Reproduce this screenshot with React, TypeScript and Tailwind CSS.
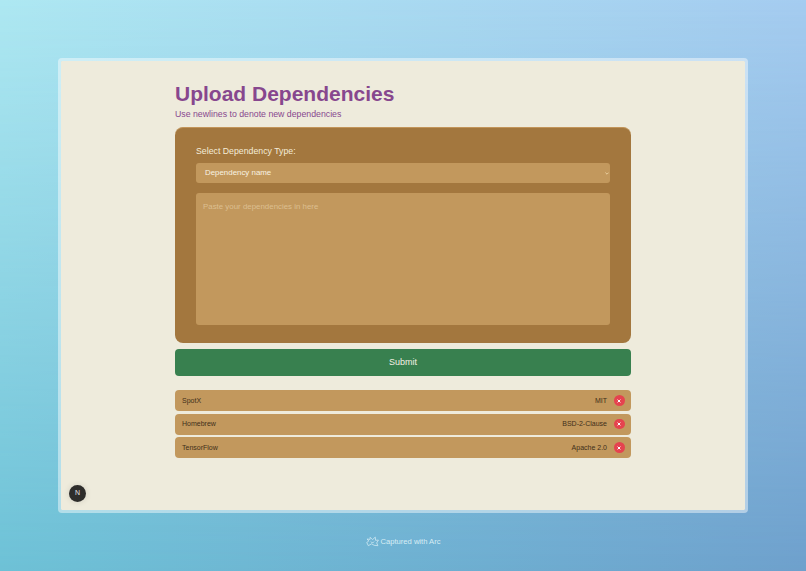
const deps = [
  { name: "SpotX", license: "MIT" },
  { name: "Homebrew", license: "BSD-2-Clause" },
  { name: "TensorFlow", license: "Apache 2.0" },
];

function ArcLogo() {
  return (
    <svg width="13" height="11" viewBox="0 0 14 11" fill="none" stroke="currentColor" strokeWidth="0.8">
      <path d="M4.5 1 L7 3.5 L10 0.8 L10.3 4.2 L13.4 4 L11.5 7 L12.8 10 L8.8 9.6 L6 8 L2.5 10 L0.8 6.5 L3 5 L1.2 2.8 L4.3 3.3 Z" strokeLinejoin="round" />
      <path d="M5 5.5 C6 7 8 7 9 5.5" />
    </svg>
  );
}

export default function App() {
  return (
    <div className="relative h-[571px] w-[806px] overflow-hidden bg-[linear-gradient(to_right,#aee8f2,#a5ccf0)] font-['Liberation_Sans',Arial,sans-serif]">
      {/* lower half of the wallpaper fades in over the top colours */}
      <div className="absolute inset-0 bg-[linear-gradient(to_right,#6dc1d6,#6ea0cc)] [mask-image:linear-gradient(to_bottom,transparent,black)]" />

      <div className="relative flex h-full flex-col">
        <div className="px-[58px] pt-[58px]">
          <div className="relative h-[455px] rounded-[4px] border-[3px] border-white/45 bg-[#eeebdc] bg-clip-padding">
            <div className="mx-auto w-[456px] pt-[20px]">
              <h1 className="text-[21px] leading-[25px] font-bold text-[#87478e]">Upload Dependencies</h1>
              <p className="mt-[2px] text-[8.75px] leading-[13px] text-[#87478e]">Use newlines to denote new dependencies</p>

              <div className="mt-[6px] rounded-[8px] border-t border-t-[#c2955a] bg-[#a3773e] px-[21px] pt-[17px] pb-[18px]">
                <div className="text-[8.75px] leading-[12px] text-[#f4ecd8]">Select Dependency Type:</div>
                <div className="mt-[6px] flex h-[20px] items-center justify-between rounded-[3px] bg-[#c2985d] pr-[1px] pl-[9px] text-[7.9px] text-[#f8f2e2]">
                  <span>Dependency name</span>
                  <svg width="4" height="3" viewBox="0 0 4 3" fill="none" stroke="#e9cf9f" strokeWidth="1">
                    <path d="M0.4 0.6 L2 2.2 L3.6 0.6" />
                  </svg>
                </div>
                <div className="mt-[10px] h-[132px] rounded-[3px] bg-[#c2985d] px-[7px] py-[9px] text-[7.9px] leading-[10px] text-[#dcbf90]">
                  Paste your dependencies in here
                </div>
              </div>

              <button className="mt-[6px] block h-[27px] w-full rounded-[4px] bg-[#38804f] pt-[1px] text-[9px] text-[#f4f1e4]">Submit</button>

              <div className="mt-[14px] flex flex-col gap-[2.5px]">
                {deps.map((d) => (
                  <div key={d.name} className="flex h-[21px] items-center justify-between rounded-[4px] bg-[#c2985d] pr-[6.5px] pl-[7px] text-[7px] text-[#3f2f1a]">
                    <span className="pt-[1px]">{d.name}</span>
                    <div className="flex items-center gap-[7px]">
                      <span className="pt-[1px]">{d.license}</span>
                      <span className="flex h-[10.5px] w-[10.5px] items-center justify-center rounded-full bg-[#e5434f]">
                        <svg width="4" height="4" viewBox="0 0 4 4" stroke="#fff" strokeWidth="1">
                          <path d="M0.6 0.6 L3.4 3.4 M3.4 0.6 L0.6 3.4" />
                        </svg>
                      </span>
                    </div>
                  </div>
                ))}
              </div>
            </div>

            <div className="absolute bottom-[8px] left-[8px] flex h-[17px] w-[17px] items-center justify-center rounded-full bg-[#2e2d2b] text-[7px] text-[#e5e5e5] shadow-[0_0_6px_rgba(0,0,0,0.12)]">
              N
            </div>
          </div>
        </div>

        <div className="mt-[23px] flex items-center justify-center gap-[2px] text-[7.6px] font-medium text-[#d8eef5]">
          <ArcLogo />
          <span>Captured with Arc</span>
        </div>
      </div>
    </div>
  );
}
